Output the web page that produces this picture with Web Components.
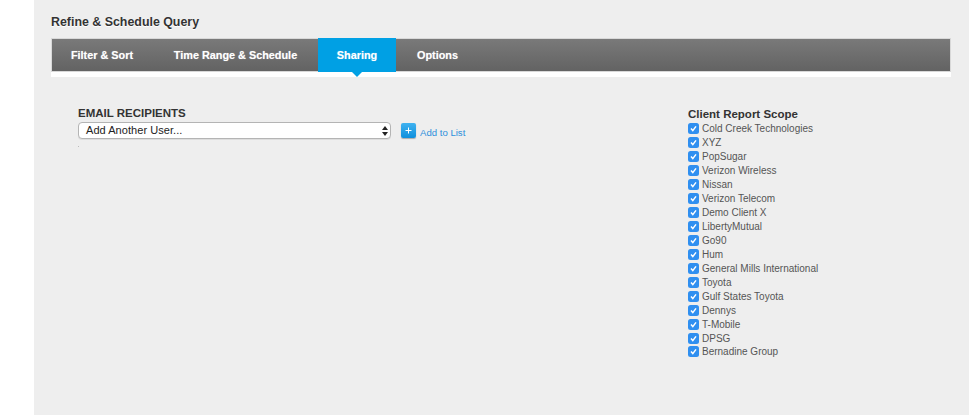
<!DOCTYPE html>
<html><head><meta charset="utf-8"><style>
html,body{margin:0;padding:0;background:#fff;height:415px;overflow:hidden}
body{font-family:"Liberation Sans",Arial,sans-serif}
</style></head><body>
<query-page>
  <span slot="title">Refine &amp; Schedule Query</span>
  <tab-bar slot="tabs">
    <tab-item w="102">Filter &amp; Sort</tab-item>
    <tab-item w="165">Time Range &amp; Schedule</tab-item>
    <tab-item w="78" active>Sharing</tab-item>
    <tab-item w="83">Options</tab-item>
  </tab-bar>
  <email-panel slot="left"></email-panel>
  <scope-list slot="right" heading="Client Report Scope">
    <scope-item>Cold Creek Technologies</scope-item>
    <scope-item>XYZ</scope-item>
    <scope-item>PopSugar</scope-item>
    <scope-item>Verizon Wireless</scope-item>
    <scope-item>Nissan</scope-item>
    <scope-item>Verizon Telecom</scope-item>
    <scope-item>Demo Client X</scope-item>
    <scope-item>LibertyMutual</scope-item>
    <scope-item>Go90</scope-item>
    <scope-item>Hum</scope-item>
    <scope-item>General Mills International</scope-item>
    <scope-item>Toyota</scope-item>
    <scope-item>Gulf States Toyota</scope-item>
    <scope-item>Dennys</scope-item>
    <scope-item>T-Mobile</scope-item>
    <scope-item>DPSG</scope-item>
    <scope-item>Bernadine Group</scope-item>
  </scope-list>
</query-page>
<script>
function def(name, html, extra){
  customElements.define(name, class extends HTMLElement{
    constructor(){super();this.attachShadow({mode:'open'}).innerHTML=html;}
    connectedCallback(){ if(extra) extra(this); }
  });
}
def('query-page',`<style>
:host{display:block;width:935px;height:415px;margin-left:34px;background:#eeeeee;box-sizing:border-box;padding:15px 18px 0 17px;color:#333}
.title{font-size:12.4px;font-weight:bold;line-height:15px;height:23px;color:#333;text-shadow:0 1px 0 #fff}
.body{display:flex;padding-top:30px}
.l{width:636px;padding-left:27px;box-sizing:border-box;flex:none}
.r{margin-left:1px}
</style>
<div class="title"><slot name="title"></slot></div>
<slot name="tabs"></slot>
<div class="body"><div class="l"><slot name="left"></slot></div><div class="r"><slot name="right"></slot></div></div>`);
def('tab-bar',`<style>
:host{display:block;width:900px;height:39px;background:#fff;box-sizing:border-box;position:relative}
.bar{display:flex;height:34px;background:linear-gradient(#7a7a7a,#626262);box-shadow:0 0 0 1px #d8d8d8 inset}
</style><div class="bar"><slot></slot></div>`);
def('tab-item',`<style>
:host{display:block;position:relative;height:34px;font-size:10.85px;font-weight:bold;line-height:35px;color:#fff;text-align:center;text-shadow:0 0 1px rgba(255,255,255,.5);box-sizing:border-box}
:host([active]){background:#00a0e4}
:host([active]) .c{display:block}
.c{display:none;position:absolute;left:50%;margin-left:-5px;bottom:-5px;width:0;height:0;border:5px solid transparent;border-bottom:0;border-top-color:#00a0e4}
</style><slot></slot><i class="c"></i>`, el=>{el.style.width=el.getAttribute('w')+'px'});
def('email-panel',`<style>
:host{display:block;color:#333}
h3{margin:0;font-size:11.5px;line-height:13px;font-weight:bold;color:#333}
.row{display:flex;align-items:center;margin-top:2px}
.sel{width:313px;height:17px;box-sizing:border-box;background:#fff;border:1px solid #b4b4b4;border-radius:4px;font-size:11px;line-height:15px;padding-left:7px;color:#222;display:flex;justify-content:space-between;letter-spacing:.05px;box-shadow:0 1px 0 #ddd}
.sel svg{margin:3px 2px 0 0}
.plus{width:15px;height:15px;border-radius:2px;background:linear-gradient(#3fb2f0,#0f8fdc);margin-left:10px;box-shadow:0 1px 1px #aaa;display:flex;align-items:center;justify-content:center}
.add{font-size:9.6px;color:#2d8fdc;margin-left:4px;position:relative;top:2px}
.dot{width:1px;height:1px;background:#bbb;margin-top:7px}
</style>
<h3>EMAIL RECIPIENTS</h3>
<div class="row"><div class="sel"><span>Add Another User...</span><svg width="6" height="10" viewBox="0 0 6 10"><path d="M3 0L6 4H0Z M3 10L0 6H6Z" fill="#222"/></svg></div>
<div class="plus"><svg width="7" height="7" viewBox="0 0 7 7"><path d="M3.5 0.5V6.5M.5 3.5H6.5" stroke="#fff" stroke-width="1"/></svg></div><span class="add">Add to List</span></div>
<div class="dot"></div>`);
def('scope-list',`<style>
:host{display:block}
h3{margin:0 0 1px;font-size:11.5px;line-height:14px;font-weight:bold;color:#333}
</style><h3 id="h"></h3><slot></slot>`, el=>{el.shadowRoot.getElementById('h').textContent=el.getAttribute('heading')});
def('scope-item',`<style>
:host{display:flex;align-items:center;height:13.95px;font-size:10px;color:#555}
.b{width:11px;height:11px;border-radius:2.5px;background:#2f8ff0;margin-right:3px;display:flex;align-items:center;justify-content:center;flex:none}
</style><span class="b"><svg width="9" height="9" viewBox="0 0 9 9"><path d="M2 4.6L3.8 6.6L7 2.4" fill="none" stroke="#fff" stroke-width="1.5"/></svg></span><slot></slot>`);
</script>
</body></html>
